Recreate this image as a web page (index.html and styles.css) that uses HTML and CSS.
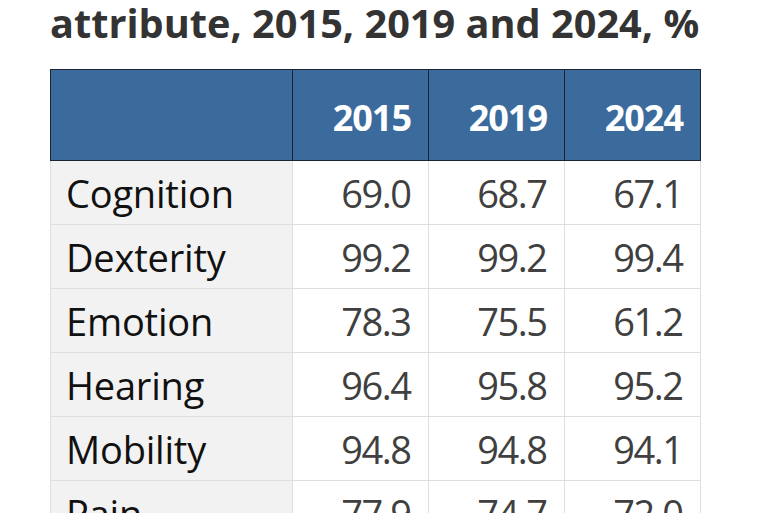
FILE: index.html
```html
<!DOCTYPE html>
<html lang="en">
<head>
<meta charset="utf-8">
<title>Attribute table</title>
<link rel="stylesheet" href="styles.css">
</head>
<body>
<div class="page">
  <h2 class="title">attribute, 2015, 2019 and 2024, %</h2>
  <table class="data">
    <colgroup>
      <col class="c-label">
      <col class="c-num">
      <col class="c-num">
      <col class="c-num">
    </colgroup>
    <thead>
      <tr>
        <th class="label"></th>
        <th>2015</th>
        <th>2019</th>
        <th>2024</th>
      </tr>
    </thead>
    <tbody>
      <tr><td class="label">Cognition</td><td>69.0</td><td>68.7</td><td>67.1</td></tr>
      <tr><td class="label">Dexterity</td><td>99.2</td><td>99.2</td><td>99.4</td></tr>
      <tr><td class="label">Emotion</td><td>78.3</td><td>75.5</td><td>61.2</td></tr>
      <tr><td class="label">Hearing</td><td>96.4</td><td>95.8</td><td>95.2</td></tr>
      <tr><td class="label">Mobility</td><td>94.8</td><td>94.8</td><td>94.1</td></tr>
      <tr><td class="label">Pain</td><td>77.9</td><td>74.7</td><td>72.0</td></tr>
    </tbody>
  </table>
</div>
</body>
</html>
```
FILE: styles.css
```css
html, body {
  margin: 0;
  padding: 0;
  background: #ffffff;
  height: 513px;
  overflow: hidden;
}
body {
  font-family: "Open Sans", "Noto Sans", sans-serif;
}
.page {
  padding-left: 50px;
  width: 650px;
}
.title {
  margin: 0;
  height: 69px;
  font-size: 39.7px;
  line-height: 47px;
  font-weight: 700;
  color: #333333;
  white-space: nowrap;
}
.data {
  border-collapse: collapse;
  table-layout: fixed;
  width: 650px;
}
.c-label { width: 242px; }
.c-num { width: 136px; }
.data th {
  height: 91px;
  padding: 4px 17px 0 0;
  box-sizing: border-box;
  background: #3b6a9d;
  border: 1px solid #1a2433;
  color: #ffffff;
  font-size: 36px;
  letter-spacing: -1px;
  font-weight: 700;
  text-align: right;
  vertical-align: middle;
}
.data td {
  height: 64px;
  padding: 0 17.5px 0 0;
  box-sizing: border-box;
  border: 1px solid #dedede;
  background: #ffffff;
  color: #404040;
  font-size: 38px;
  letter-spacing: -1.5px;
  text-align: right;
  vertical-align: middle;
}
.data td.label {
  background: #f2f2f2;
  color: #111111;
  text-align: left;
  letter-spacing: -0.2px;
  padding: 0 0 0 15px;
}
```
